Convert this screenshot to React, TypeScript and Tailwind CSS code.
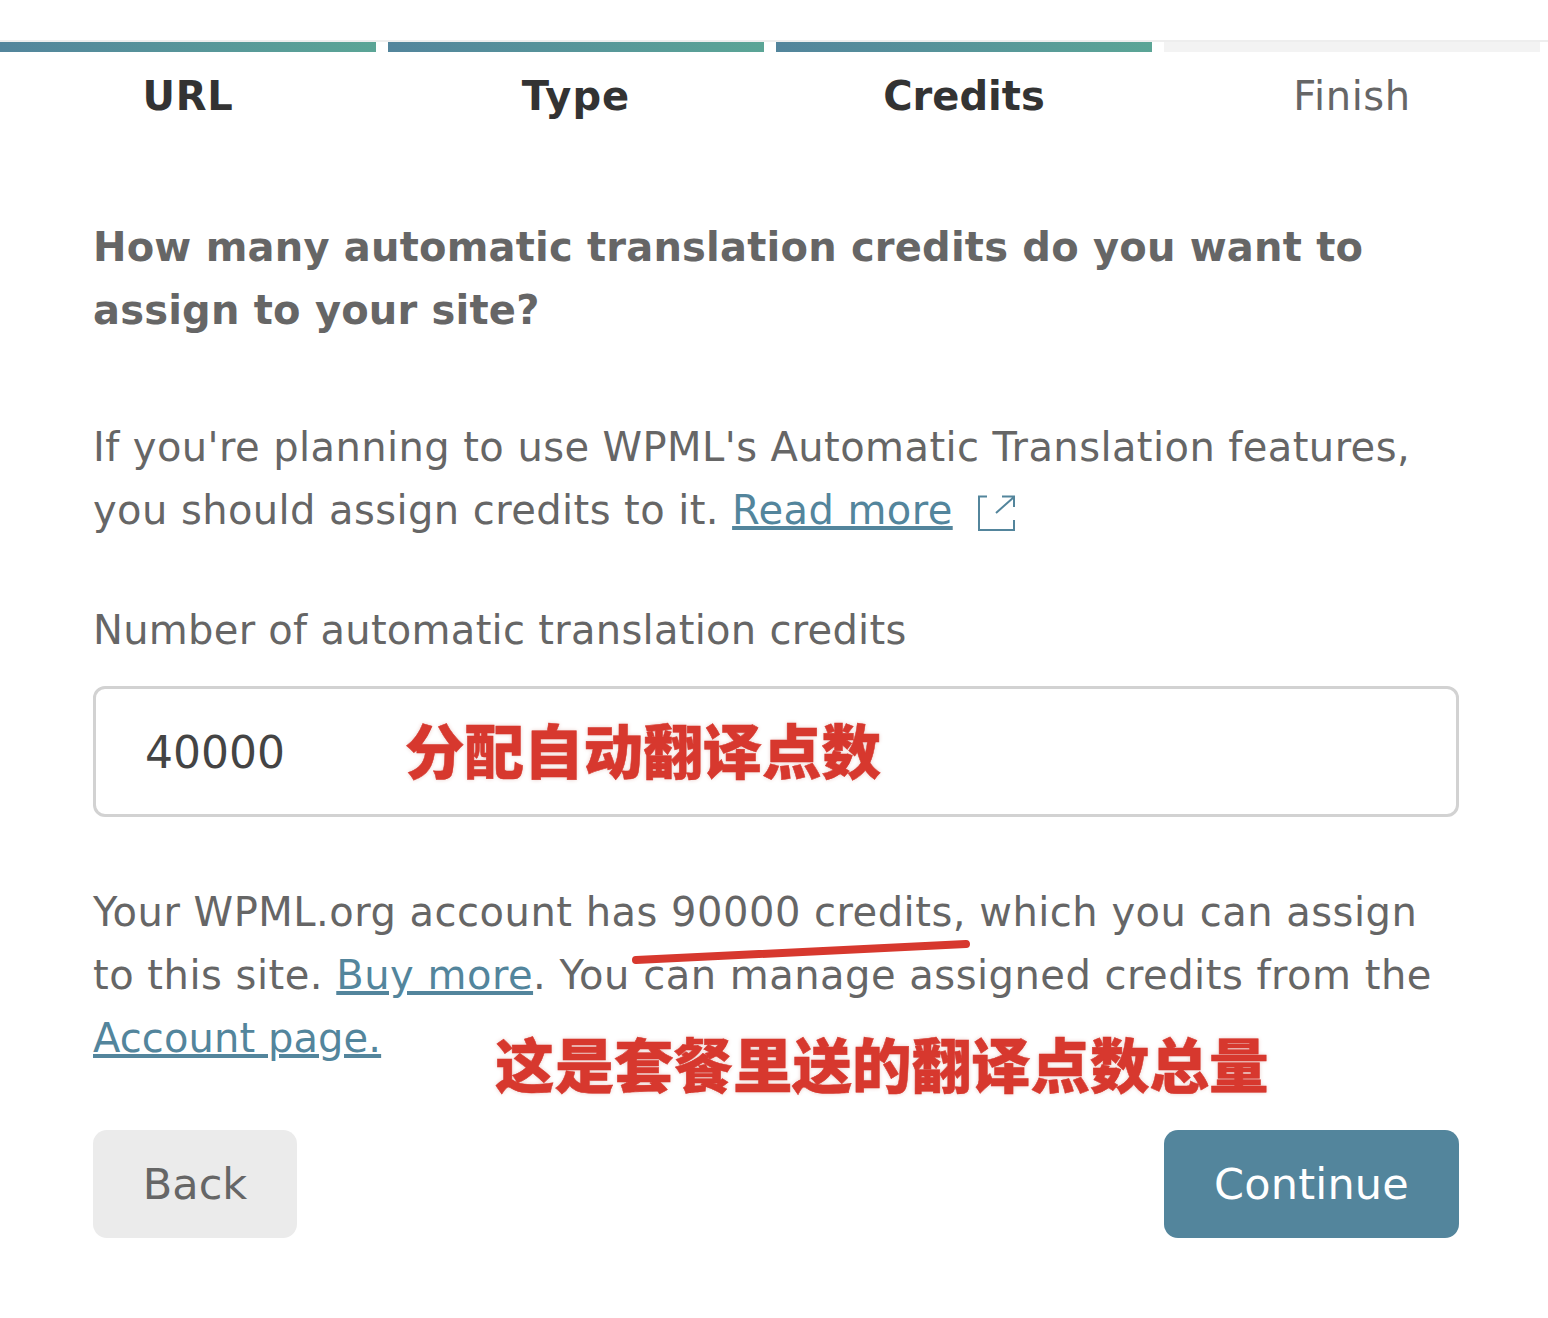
const steps = [
  { label: "URL", text: "font-bold tracking-[0.8px] text-[#333]", done: true },
  { label: "Type", text: "font-bold tracking-[1px] text-[#333]", done: true },
  { label: "Credits", text: "font-bold tracking-[0px] text-[#333]", done: true },
  { label: "Finish", text: "tracking-[0.6px] text-[#666]", done: false },
];

const annotation =
  "font-['Noto_Sans_CJK_SC',sans-serif] font-black text-[#d7382e] [-webkit-text-stroke:0.5px_#d7382e] [text-shadow:0_0_4px_#e8c9c5]";

export default function App() {
  return (
    <div className="relative h-[1318px] w-[1548px] overflow-hidden bg-white font-['DejaVu_Sans',sans-serif] text-[40px] text-[#666]">
      <div className="pt-[40px]">
        <div className="h-[2px] bg-[#eeeeee]" />
        <div className="grid grid-cols-4 gap-x-[12px] pr-[8px]">
          {steps.map((step) => (
            <div key={step.label} className="text-center">
              <div
                className={
                  step.done
                    ? "h-[10px] bg-gradient-to-r from-[#53859c] to-[#5ba596]"
                    : "h-[10px] bg-[#f3f3f3]"
                }
              />
              <div className={`mt-[13px] leading-[63px] ${step.text}`}>{step.label}</div>
            </div>
          ))}
        </div>
      </div>

      <div className="pt-[88px] pr-[89px] pl-[93px]">
        <h2 className="text-[40px] leading-[63px] font-bold tracking-[0.2px] text-[#666]">
          How many automatic translation credits do you want to assign to your site?
        </h2>

        <p className="mt-[74px] leading-[63px] tracking-[0.42px]">
          If you're planning to use WPML's Automatic Translation features, you should assign credits to it.{" "}
          <a className="text-[#53859c] underline">Read more</a>
          <svg
            className="ml-[25px] inline-block h-[38px] w-[38px] align-[-9px] text-[#53859c]"
            viewBox="0 0 38 38"
            fill="none"
            stroke="currentColor"
            strokeWidth="2"
          >
            <path d="M9 1.5H1V35H36V25" />
            <path d="M18 18L36 2M24 1.5H36V12" />
          </svg>
        </p>

        <label className="mt-[57px] block leading-[63px] tracking-[0.28px]">
          Number of automatic translation credits
        </label>

        <div className="mt-[24px] flex h-[131px] items-center rounded-[12px] border-[3px] border-[#d2d2d2] pl-[49px] text-[44px] text-[#444]">
          <span className="mt-[2px]">40000</span>
          <span className={`-mt-[6px] ml-[120px] text-[59.5px] leading-none ${annotation}`}>分配自动翻译点数</span>
        </div>

        <p className="mt-[64px] leading-[63px] tracking-[0.5px]">
          Your WPML.org account has 90000 credits, which you can assign to this site.{" "}
          <a className="text-[#53859c] underline">Buy more</a>. You can manage assigned credits from the{" "}
          <a className="tracking-[0.1px] text-[#53859c] underline">Account page.</a>
        </p>

        <div className="mt-[60px] flex justify-between text-[43px]">
          <button className="h-[108px] w-[204px] rounded-[14px] bg-[#ebebeb] text-[#666]">Back</button>
          <button className="h-[108px] w-[295px] rounded-[14px] bg-[#53859c] tracking-[0.2px] text-white">
            Continue
          </button>
        </div>
      </div>

      {/* hand drawn annotation over the paragraph */}
      <svg className="absolute top-[935px] left-[625px] h-[35px] w-[350px]" viewBox="0 0 350 35" fill="none">
        <path d="M11 25L341 9" stroke="#d7382e" strokeWidth="8" strokeLinecap="round" />
      </svg>
      <div className={`absolute top-[1033px] left-[495px] text-[59.5px] leading-none whitespace-nowrap ${annotation}`}>
        这是套餐里送的翻译点数总量
      </div>
    </div>
  );
}
